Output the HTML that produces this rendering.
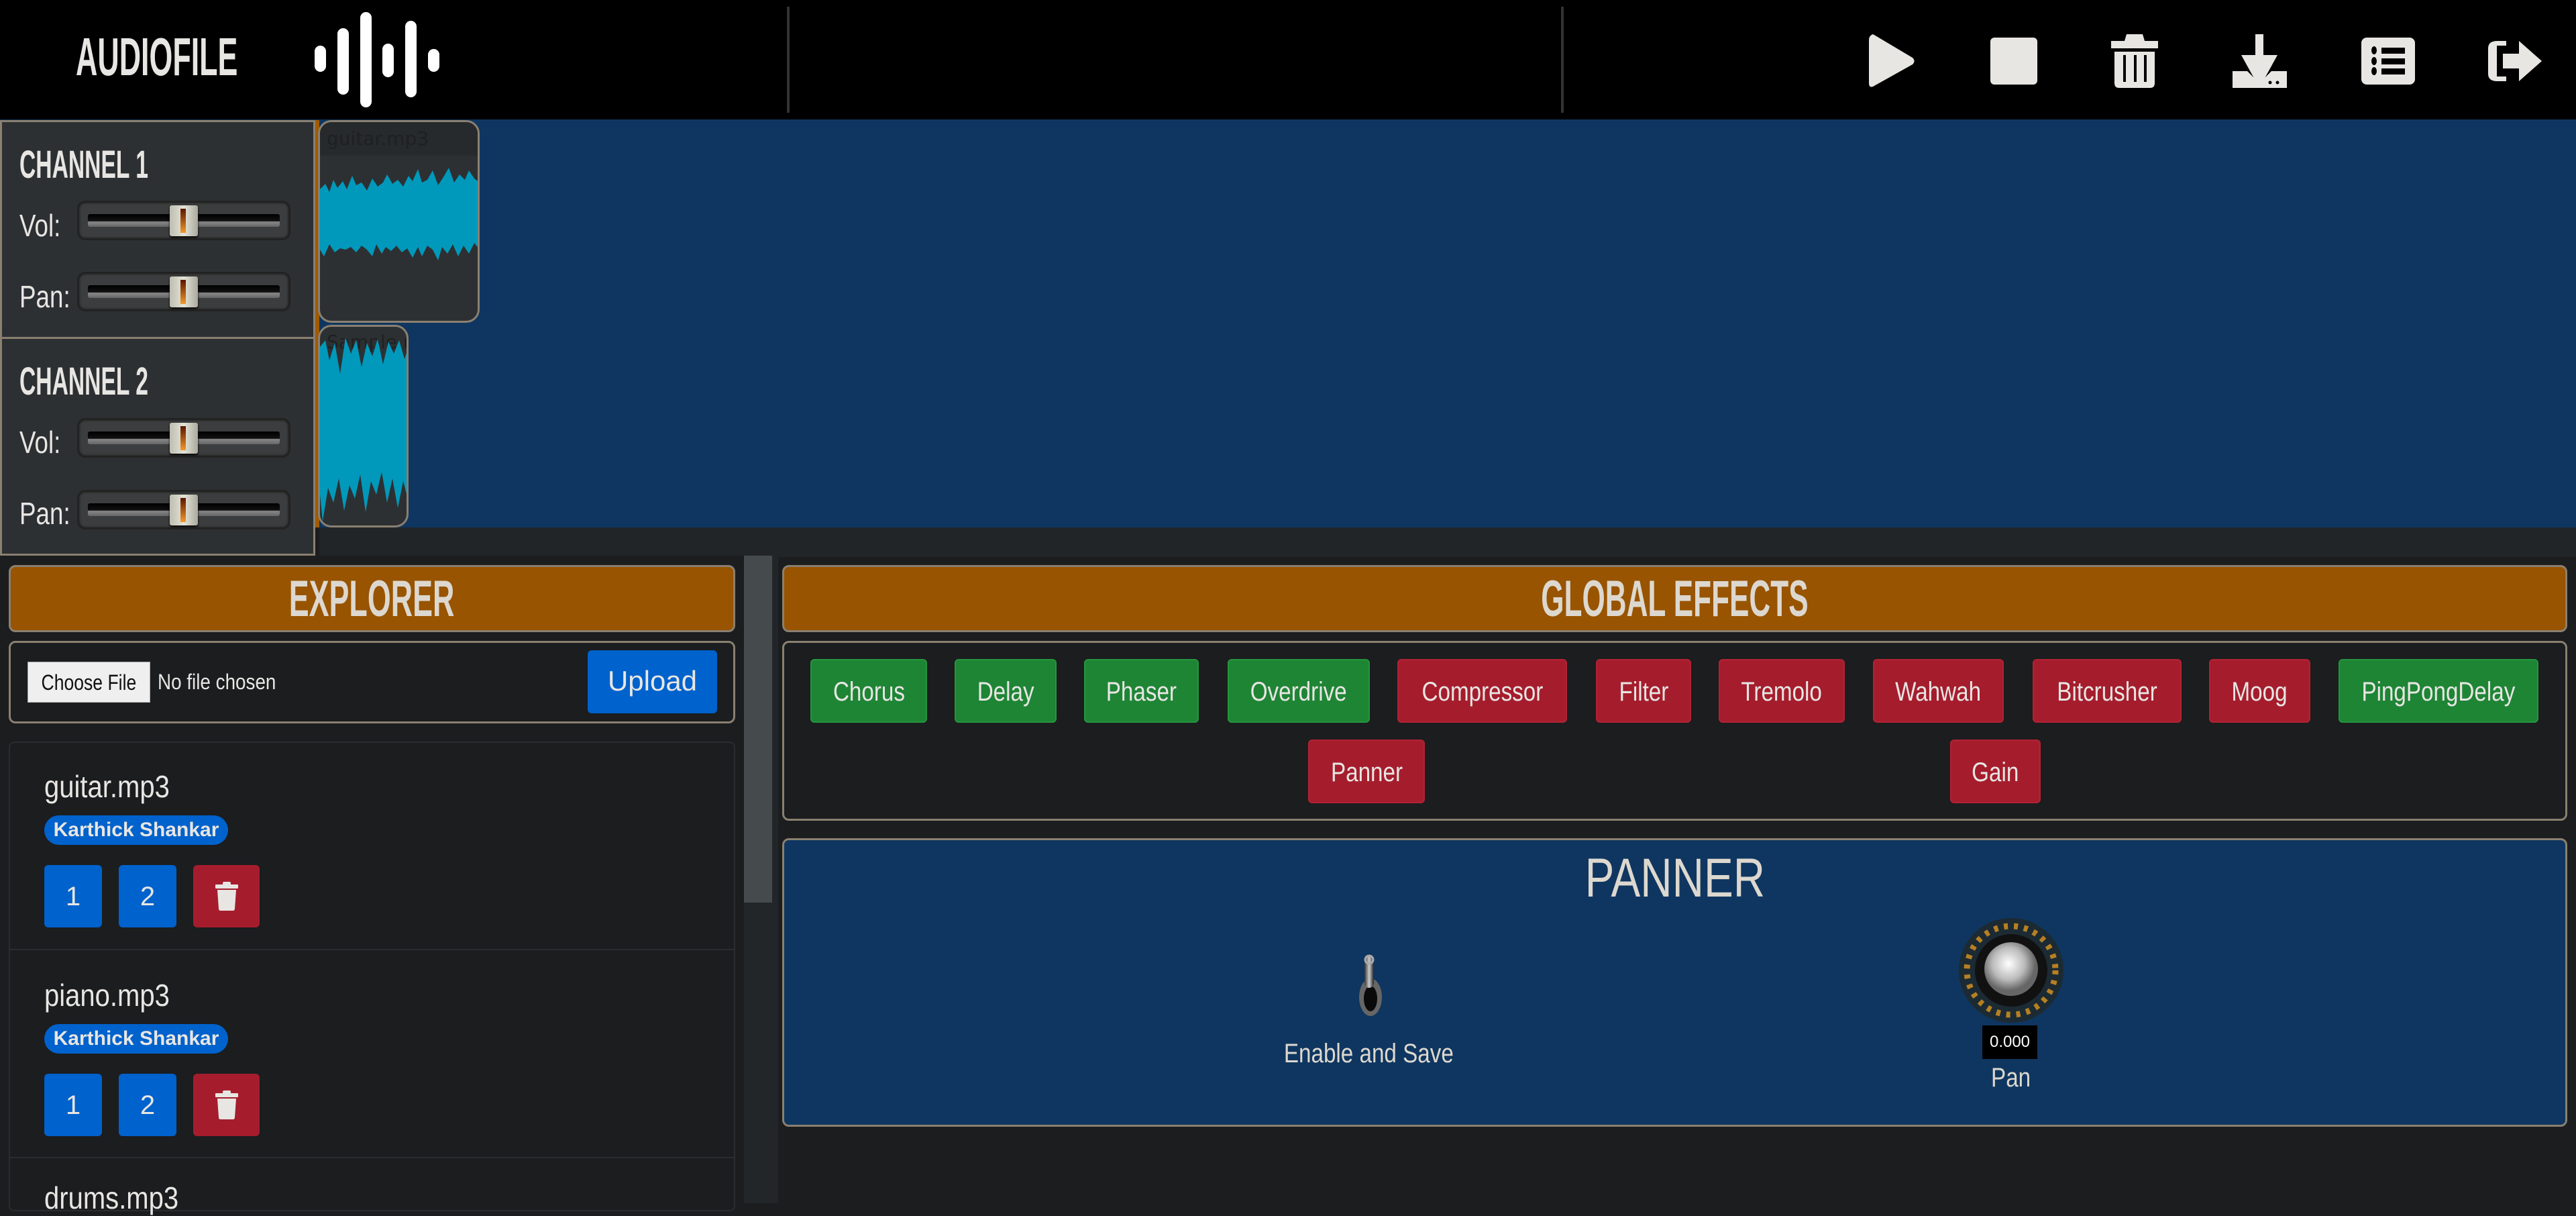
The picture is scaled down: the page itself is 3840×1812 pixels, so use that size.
<!DOCTYPE html>
<html><head><meta charset="utf-8"><style>
*{margin:0;padding:0;box-sizing:border-box}
body{width:3840px;height:1793px;background:#1b1d1f;position:relative;overflow:hidden;font-family:"Liberation Sans",sans-serif;color:#e8e6e3}
.abs{position:absolute}
.sq{display:inline-block;transform:scaleX(.83)}
.hdr{left:0;top:0;width:3840px;height:178px;background:#000}
.bar{position:absolute;width:17px;background:#fff;border-radius:9px}
.div{position:absolute;top:10px;width:4px;height:158px;background:#333}
.track{left:0;top:178px;width:3840px;height:608px;background:#0f3660}
.chan{position:absolute;left:0;width:470px;background:#2d3033;border:3px solid #8a8070}
.chan h2{position:absolute;left:26px;top:30px;font-size:58px;font-weight:bold;color:#e8e6e3;transform:scaleX(.58);transform-origin:left;white-space:nowrap}
.lbl{position:absolute;left:26px;font-size:46px;transform:scaleX(.8);transform-origin:left}
.sl{position:absolute;left:112px;width:318px;height:59px;border-radius:12px;background:#3c3d3e;box-shadow:inset 0 0 4px #000;border:2px solid #222}
.sl .in{position:absolute;left:14px;right:14px;top:18px;height:19px;background:linear-gradient(#000 0,#111 55%,#888 60%,#666 100%);border-radius:3px}
.sl .th{position:absolute;left:136px;top:5px;width:42px;height:46px;background:linear-gradient(90deg,#bdbdb0,#e4e3d8 50%,#aaa99c);border-radius:3px;box-shadow:0 2px 3px #000}
.sl .th:after{content:"";position:absolute;left:16px;top:5px;width:8px;height:36px;background:linear-gradient(#5a1400,#f39a2c);}
.clip{position:absolute;background:#2d3033;border:3px solid #8a8070;border-radius:20px;overflow:hidden}
.box{position:absolute;border:3px solid #8a8070;border-radius:10px}
.orange{background:#985400;text-align:center;color:#ddd8cf;font-weight:bold;white-space:nowrap}
.btn{position:absolute;height:95px;border-radius:6px;color:#e8e6e3;font-size:40px;line-height:95px;text-align:center;white-space:nowrap}
.g{background:#1e8535;border:2px solid #24963e}
.r{background:#a51d2d;border:2px solid #b22234}
.b{background:#0062cc;border-radius:6px}
.item{position:absolute;left:66px;font-size:46px;font-weight:300;transform:scaleX(.87);transform-origin:left}
</style></head><body>
<div class="abs hdr">
 <div class="abs" style="left:113px;top:40px;font-size:80px;font-weight:bold;color:#e8e6e3;transform:scaleX(.56);transform-origin:left;line-height:90px">AUDIOFILE</div>
 <div class="bar" style="left:469px;top:68px;height:39px"></div>
 <div class="bar" style="left:503px;top:42px;height:99px"></div>
 <div class="bar" style="left:537px;top:18px;height:142px"></div>
 <div class="bar" style="left:570px;top:65px;height:50px"></div>
 <div class="bar" style="left:604px;top:31px;height:114px"></div>
 <div class="bar" style="left:638px;top:73px;height:34px"></div>
 <div class="div" style="left:1173px"></div>
 <div class="div" style="left:2327px"></div>
 <svg class="abs" style="left:0;top:0" width="3840" height="178" fill="#e8e6e3">
  <path d="M2792 51 Q2786 53 2786 60 L2786 124 Q2786 131 2792 129 L2851 96 Q2856 91 2851 86 Z"/>
  <rect x="2967" y="56" width="70" height="70" rx="6"/>
  <path d="M3147 61 H3217 V72 H3147 Z M3170 51 H3194 L3197 61 H3167 Z M3152 77 H3212 V124 Q3212 131 3205 131 H3159 Q3152 131 3152 124 Z" />
  <rect x="3165" y="82" width="4" height="40" fill="#000"/><rect x="3181" y="82" width="4" height="40" fill="#000"/><rect x="3196" y="82" width="4" height="40" fill="#000"/>
  <path d="M3362 51 H3374 V82 H3395 L3368 131 L3341 82 H3362 Z"/>
  <path d="M3328 106 H3350 L3368 124 L3386 106 H3409 V131 H3328 Z"/>
  <circle cx="3384" cy="123" r="2.5" fill="#000"/><circle cx="3395" cy="123" r="2.5" fill="#000"/>
  <rect x="3520" y="56" width="80" height="70" rx="8"/>
  <g fill="#000"><ellipse cx="3539" cy="75" rx="4" ry="6"/><ellipse cx="3539" cy="91" rx="4" ry="6"/><ellipse cx="3539" cy="106" rx="4" ry="6"/><rect x="3550" y="71" width="35" height="9"/><rect x="3550" y="87" width="35" height="9"/><rect x="3550" y="102" width="35" height="9"/></g>
  <path d="M3723 61 H3736 V68 H3722 V114 H3736 V121 H3723 Q3709 121 3709 110 V72 Q3709 61 3723 61 Z"/>
  <path d="M3731 80 H3755 V61 L3789 91 L3755 121 V102 H3731 Z"/>
 </svg>
</div>
<div class="abs track"></div>
<div class="abs" style="left:470px;top:179px;width:6px;height:607px;background:#a05a00"></div>
<div class="chan" style="top:179px;height:326px"><h2>CHANNEL 1</h2>
 <div class="lbl" style="top:127px">Vol:</div><div class="lbl" style="top:233px">Pan:</div>
 <div class="sl" style="top:117px"><div class="in"></div><div class="th"></div></div>
 <div class="sl" style="top:223px"><div class="in"></div><div class="th"></div></div></div>
<div class="chan" style="top:502px;height:326px"><h2>CHANNEL 2</h2>
 <div class="lbl" style="top:127px">Vol:</div><div class="lbl" style="top:233px">Pan:</div>
 <div class="sl" style="top:118px"><div class="in"></div><div class="th"></div></div>
 <div class="sl" style="top:225px"><div class="in"></div><div class="th"></div></div></div>
<div class="clip" style="left:474px;top:179px;width:241px;height:302px">
 <div style="height:50px;background:#262a2c;color:#1e2022;font-size:28px;padding:8px 0 0 10px;font-family:'DejaVu Sans',sans-serif">guitar.mp3</div>
 <svg class="abs" style="left:0;top:0" width="241" height="302"><polygon fill="#0099bb" points="0,100 8,92 14,104 20,86 26,98 34,88 40,100 48,80 54,94 62,90 70,102 78,84 86,96 94,90 100,78 108,92 116,86 124,96 132,80 138,88 146,70 152,90 160,86 168,72 176,94 184,82 192,68 200,90 208,78 216,86 222,72 230,84 238,90 238,190 230,180 222,196 214,184 206,200 198,182 190,196 182,186 176,206 168,190 160,184 152,200 146,186 138,202 130,188 122,194 114,184 106,192 98,186 92,196 84,182 78,200 70,190 62,184 54,194 46,186 38,190 30,188 22,194 14,182 6,200 0,190"/></svg>
</div>
<div class="clip" style="left:474px;top:484px;width:135px;height:302px">
 <div style="height:40px;color:#1e2022;font-size:28px;padding:6px 0 0 10px;font-family:'DejaVu Sans',sans-serif;white-space:nowrap">Sample.mp3</div>
 <svg class="abs" style="left:0;top:0" width="135" height="302"><polygon fill="#0099bb" points="0,30 8,20 14,50 22,24 30,70 38,16 46,40 54,20 62,60 70,24 78,44 86,18 94,56 102,22 110,40 118,20 126,48 132,30 132,260 124,230 116,270 108,226 100,262 92,216 84,250 76,230 68,276 60,220 52,256 44,236 36,274 28,226 20,262 12,240 4,290 0,250"/></svg>
</div>
<div class="abs" style="left:476px;top:786px;width:3364px;height:44px;background:#222528"></div>
<div class="abs" style="left:0;top:828px;width:1160px;height:965px;background:#1b1d1f"></div>
<div class="abs" style="left:1109px;top:828px;width:51px;height:965px;background:#222629"></div>
<div class="abs" style="left:1109px;top:828px;width:42px;height:517px;background:#454a4d"></div>
<div class="box orange" style="left:13px;top:842px;width:1083px;height:100px;font-size:76px;line-height:96px"><span style="display:inline-block;transform:scaleX(.59)">EXPLORER</span></div>
<div class="box" style="left:13px;top:955px;width:1083px;height:123px"></div>
<div class="abs" style="left:41px;top:986px;width:183px;height:61px;background:#efefef;color:#111;font-size:32px;line-height:61px;text-align:center;border:1px solid #aaa"><span class="sq">Choose File</span></div>
<div class="abs" style="left:235px;top:986px;font-size:32px;line-height:61px;color:#e8e6e3;transform:scaleX(.87);transform-origin:left;white-space:nowrap">No file chosen</div>
<div class="abs b" style="left:876px;top:969px;width:193px;height:94px;font-size:42px;line-height:92px;text-align:center;color:#e8e6e3">Upload</div>
<div class="abs" style="left:13px;top:1105px;width:1083px;height:700px;border:2px solid #2a2d30;border-radius:8px"></div>
<div class="abs" style="left:14px;top:1414px;width:1081px;height:2px;background:#2a2d30"></div>
<div class="abs" style="left:14px;top:1724px;width:1081px;height:2px;background:#2a2d30"></div>
<div class="item" style="top:1145px">guitar.mp3</div>
<div class="abs" style="left:66px;top:1215px;width:274px;height:44px;border-radius:22px;background:#0062cc;font-size:30px;font-weight:bold;line-height:44px;text-align:center">Karthick Shankar</div>
<div class="btn b" style="left:66px;top:1289px;width:86px;height:93px">1</div>
<div class="btn b" style="left:177px;top:1289px;width:86px;height:93px">2</div>
<div class="btn r" style="left:288px;top:1289px;width:99px;height:93px;border:none"><svg width="40" height="44" style="margin-top:25px" fill="#e8e6e3"><rect x="3" y="4" width="34" height="6" rx="1"/><rect x="14" y="0" width="12" height="5" rx="2"/><path d="M6 12 H34 L32 40 Q32 43 29 43 H11 Q8 43 8 40 Z"/></svg></div>
<div class="item" style="top:1456px">piano.mp3</div>
<div class="abs" style="left:66px;top:1526px;width:274px;height:44px;border-radius:22px;background:#0062cc;font-size:30px;font-weight:bold;line-height:44px;text-align:center">Karthick Shankar</div>
<div class="btn b" style="left:66px;top:1600px;width:86px;height:93px">1</div>
<div class="btn b" style="left:177px;top:1600px;width:86px;height:93px">2</div>
<div class="btn r" style="left:288px;top:1600px;width:99px;height:93px;border:none"><svg width="40" height="44" style="margin-top:25px" fill="#e8e6e3"><rect x="3" y="4" width="34" height="6" rx="1"/><rect x="14" y="0" width="12" height="5" rx="2"/><path d="M6 12 H34 L32 40 Q32 43 29 43 H11 Q8 43 8 40 Z"/></svg></div>
<div class="item" style="top:1758px">drums.mp3</div>

<div class="box orange" style="left:1166px;top:842px;width:2661px;height:100px;font-size:76px;line-height:96px"><span style="display:inline-block;transform:scaleX(.58)">GLOBAL EFFECTS</span></div>
<div class="box" style="left:1166px;top:955px;width:2661px;height:268px"></div>
<div>
<div class="btn g" style="left:1208px;top:982px;width:174px"><span class="sq">Chorus</span></div>
<div class="btn g" style="left:1423px;top:982px;width:152px"><span class="sq">Delay</span></div>
<div class="btn g" style="left:1616px;top:982px;width:171px"><span class="sq">Phaser</span></div>
<div class="btn g" style="left:1830px;top:982px;width:212px"><span class="sq">Overdrive</span></div>
<div class="btn r" style="left:2083px;top:982px;width:253px"><span class="sq">Compressor</span></div>
<div class="btn r" style="left:2379px;top:982px;width:142px"><span class="sq">Filter</span></div>
<div class="btn r" style="left:2562px;top:982px;width:188px"><span class="sq">Tremolo</span></div>
<div class="btn r" style="left:2792px;top:982px;width:195px"><span class="sq">Wahwah</span></div>
<div class="btn r" style="left:3030px;top:982px;width:222px"><span class="sq">Bitcrusher</span></div>
<div class="btn r" style="left:3293px;top:982px;width:151px"><span class="sq">Moog</span></div>
<div class="btn g" style="left:3486px;top:982px;width:298px"><span class="sq">PingPongDelay</span></div>
<div class="btn r" style="left:1950px;top:1102px;width:174px"><span class="sq">Panner</span></div>
<div class="btn r" style="left:2907px;top:1102px;width:135px"><span class="sq">Gain</span></div>
</div>
<div class="box" style="left:1166px;top:1249px;width:2661px;height:430px;background:#0f3660"></div>
<div class="abs" style="left:1166px;top:1262px;width:2661px;text-align:center;font-size:82px;color:#ddd8cf"><span style="display:inline-block;transform:scaleX(.8)">PANNER</span></div>
<svg class="abs" style="left:2010px;top:1420px" width="70" height="100">
 <defs><linearGradient id="m" x1="0" x2="1"><stop offset="0" stop-color="#333"/><stop offset=".5" stop-color="#ccc"/><stop offset="1" stop-color="#222"/></linearGradient></defs>
 <ellipse cx="33" cy="66" rx="17" ry="28" fill="#666"/>
 <ellipse cx="33" cy="68" rx="10" ry="19" fill="#0a0a0a"/>
 <rect x="24" y="4" width="14" height="48" rx="7" fill="url(#m)"/>
 <circle cx="31" cy="10" r="6" fill="none" stroke="#aaa" stroke-width="3"/>
</svg>
<div class="abs" style="left:1840px;top:1548px;width:400px;text-align:center;font-size:40px;color:#ddd8cf"><span class="sq">Enable and Save</span></div>
<svg class="abs" style="left:2918px;top:1366px" width="160" height="160">
 <defs><radialGradient id="k" cx=".45" cy=".4"><stop offset="0" stop-color="#fff"/><stop offset=".6" stop-color="#bbb"/><stop offset="1" stop-color="#666"/></radialGradient></defs>
 <circle cx="80" cy="80" r="78" fill="#1c2a33"/>
 <circle cx="80" cy="80" r="66" fill="none" stroke="#c88a20" stroke-width="9" stroke-dasharray="6 9" opacity=".9"/>
 <circle cx="80" cy="80" r="54" fill="#111"/>
 <circle cx="80" cy="78" r="40" fill="url(#k)"/>
</svg>
<div class="abs" style="left:2955px;top:1528px;width:82px;height:50px;background:#000;color:#fff;font-size:24px;line-height:50px;text-align:center">0.000</div>
<div class="abs" style="left:2898px;top:1584px;width:200px;text-align:center;font-size:40px;color:#ddd8cf"><span class="sq">Pan</span></div>
</body></html>
